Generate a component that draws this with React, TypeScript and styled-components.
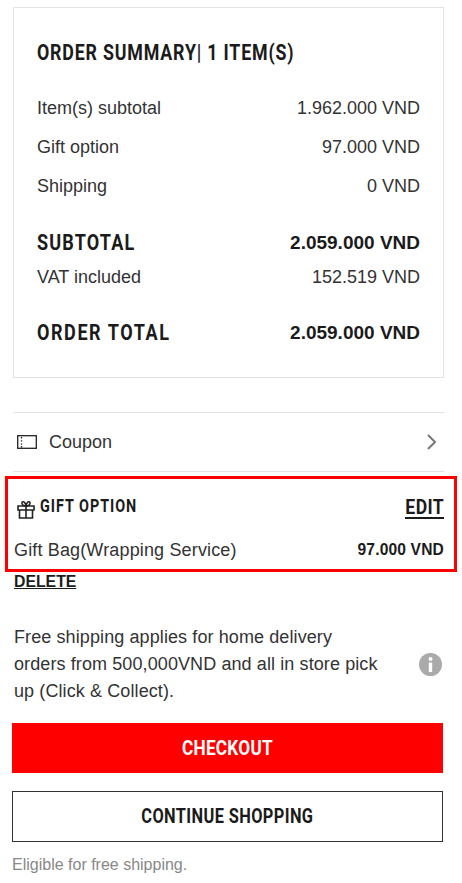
import styled, { createGlobalStyle } from "styled-components";

const GlobalStyle = createGlobalStyle`
  html, body {
    margin: 0;
    padding: 0;
    background: #fff;
  }
  * {
    box-sizing: border-box;
  }
`;

const display = `"Roboto", "Liberation Sans", sans-serif`;
const body = `"Liberation Sans", Arial, sans-serif`;

const Page = styled.div`
  width: 462px;
  height: 883px;
  overflow: hidden;
  padding: 7px 18px 0 13px;
  font-family: ${body};
  font-size: 18px;
  color: #333;
`;

const Card = styled.section`
  height: 371px;
  padding: 30px 23px 0;
  border: 1px solid #e3e3e3;
`;

// the reference heading face is a narrow bold, so Roboto gets squeezed sideways
const Condensed = styled.span<{ $size: number; $scale: number; $origin?: string; $spacing?: number }>`
  display: inline-block;
  font-family: ${display};
  font-size: ${(p) => p.$size}px;
  font-weight: 700;
  letter-spacing: ${(p) => p.$spacing ?? 1}px;
  color: #1b1b1b;
  white-space: nowrap;
  transform: scaleX(${(p) => p.$scale});
  transform-origin: ${(p) => p.$origin ?? "left"} center;
`;

const Title = styled.h2`
  margin: 0 0 21px;
  height: 30px;
  line-height: 30px;
  font-size: inherit;
`;

const Row = styled.div<{ $height?: number }>`
  display: flex;
  justify-content: space-between;
  align-items: center;
  height: ${(p) => p.$height ?? 39}px;
`;

const TotalValue = styled.span`
  font-size: 19px;
  font-weight: 700;
  color: #1b1b1b;
`;

const Spacer = styled.div<{ $height: number }>`
  height: ${(p) => p.$height}px;
`;

const CouponRow = styled.div`
  display: flex;
  align-items: center;
  height: 60px;
  margin-top: 34px;
  padding: 0 6px 0 4px;
  border-top: 1px solid #e3e3e3;
  border-bottom: 1px solid #e3e3e3;
  gap: 12px;
`;

const CouponText = styled.span`
  flex: 1;
`;

const GiftBox = styled.section`
  margin: 4px -13px 0 -8px;
  height: 96px;
  padding: 0 10px 0 6px;
  border: 3px solid #f00;
`;

const GiftHead = styled.div`
  display: flex;
  align-items: center;
  height: 56px;
  padding-top: 5px;
`;

const GiftIconWrap = styled.span`
  display: flex;
  margin: 0 5px 0 3px;
`;

const GiftName = styled.div`
  flex: 1;
  margin-top: -7px;
`;

const EditLink = styled.a`
  display: flex;
  justify-content: flex-end;
  width: 39px;
  height: 22px;
  line-height: 20px;
  margin-top: -3px;
  border-bottom: 2px solid #1b1b1b;
`;

const GiftLine = styled.div`
  display: flex;
  justify-content: space-between;
  align-items: center;
  height: 30px;
  letter-spacing: 0.15px;
`;

const GiftPrice = styled.span`
  font-size: 15.6px;
  font-weight: 700;
  color: #1b1b1b;
`;

const DeleteLink = styled.a`
  display: block;
  height: 20px;
  margin-left: 1px;
  line-height: 20px;
  font-size: 15.8px;
  font-weight: 700;
  color: #1b1b1b;
  text-decoration: underline;
`;

const Notice = styled.div`
  display: flex;
  align-items: center;
  justify-content: space-between;
  margin-top: 32px;
  padding: 0 2px 0 1px;
`;

const NoticeText = styled.p`
  margin: 0;
  width: 370px;
  line-height: 27px;
  letter-spacing: 0.1px;
`;

const ActionButton = styled.button<{ $primary?: boolean }>`
  display: flex;
  align-items: center;
  justify-content: center;
  width: 431px;
  height: ${(p) => (p.$primary ? 50 : 51)}px;
  margin: 18px 0 0 -1px;
  padding: 0 0 ${(p) => (p.$primary ? 0 : 2)}px;
  border: ${(p) => (p.$primary ? "0" : "1px solid #333")};
  background: ${(p) => (p.$primary ? "#f00" : "#fff")};
  ${Condensed} {
    color: ${(p) => (p.$primary ? "#fff" : "#1b1b1b")};
  }
`;

const Eligible = styled.p`
  margin: 12px 0 0 -1px;
  font-size: 16px;
  line-height: 22px;
  color: #888;
`;

const CouponIcon = () => (
  <svg width="20" height="14" viewBox="0 0 20 14" fill="none" stroke="#222" strokeWidth="1.3">
    <rect x="0.7" y="0.7" width="18.6" height="12.6" />
    <path d="M4.500 2v1.400M4.500 5.200v1.400M4.500 8.400v1.400M4.500 11v1.400" />
  </svg>
);

const Chevron = () => (
  <svg width="12" height="18" viewBox="0 0 12 18" fill="none" stroke="#777" strokeWidth="2">
    <path d="M2 2l7 7-7 7" />
  </svg>
);

const GiftIcon = () => (
  <svg width="18" height="19" viewBox="0 0 18 19" fill="none" stroke="#222" strokeWidth="1.6">
    <path d="M1 6h16v4H1zM2.500 10v8h13v-8M9 6v12" />
    <path d="M9 6C6.500 6 4.500 4.500 5 2.500 6 .5 8.500 2.500 9 6zM9 6c2.500 0 4.500-1.500 4-3.500C12 .5 9.500 2.500 9 6z" />
  </svg>
);

const InfoIcon = () => (
  <svg width="23" height="23" viewBox="0 0 23 23">
    <circle cx="11.500" cy="11.500" r="11.500" fill="#aaa" />
    <circle cx="11.500" cy="6" r="2" fill="#fff" />
    <path d="M9.800 9.500h3.400v9.500H9.800z" fill="#fff" />
  </svg>
);

const App = () => {
  return (
    <Page>
      <GlobalStyle />
      <Card>
        <Title>
          <Condensed $size={22} $scale={0.81}>ORDER SUMMARY| 1 ITEM(S)</Condensed>
        </Title>
        <Row>
          <span>Item(s) subtotal</span>
          <span>1.962.000 VND</span>
        </Row>
        <Row>
          <span>Gift option</span>
          <span>97.000 VND</span>
        </Row>
        <Row>
          <span>Shipping</span>
          <span>0 VND</span>
        </Row>
        <Spacer $height={17} />
        <Row>
          <Condensed $size={22} $scale={0.82} $spacing={1.4}>SUBTOTAL</Condensed>
          <TotalValue>2.059.000 VND</TotalValue>
        </Row>
        <Row $height={30}>
          <span>VAT included</span>
          <span>152.519 VND</span>
        </Row>
        <Spacer $height={21} />
        <Row>
          <Condensed $size={22} $scale={0.82} $spacing={1.9}>ORDER TOTAL</Condensed>
          <TotalValue>2.059.000 VND</TotalValue>
        </Row>
      </Card>

      <CouponRow>
        <CouponIcon />
        <CouponText>Coupon</CouponText>
        <Chevron />
      </CouponRow>

      <GiftBox>
        <GiftHead>
          <GiftIconWrap>
            <GiftIcon />
          </GiftIconWrap>
          <GiftName>
            <Condensed $size={18} $scale={0.8} $spacing={1.2}>GIFT OPTION</Condensed>
          </GiftName>
          <EditLink>
            <Condensed $size={20} $scale={0.88} $origin="right" $spacing={0.5}>EDIT</Condensed>
          </EditLink>
        </GiftHead>
        <GiftLine>
          <span>Gift Bag(Wrapping Service)</span>
          <GiftPrice>97.000 VND</GiftPrice>
        </GiftLine>
      </GiftBox>
      <DeleteLink>DELETE</DeleteLink>

      <Notice>
        <NoticeText>
          Free shipping applies for home delivery orders from 500,000VND and all in store pick up (Click &amp; Collect).
        </NoticeText>
        <InfoIcon />
      </Notice>

      <ActionButton $primary>
        <Condensed $size={21} $scale={0.82} $origin="center" $spacing={0.3}>CHECKOUT</Condensed>
      </ActionButton>
      <ActionButton>
        <Condensed $size={21} $scale={0.78} $origin="center" $spacing={0.5}>CONTINUE SHOPPING</Condensed>
      </ActionButton>
      <Eligible>Eligible for free shipping.</Eligible>
    </Page>
  );
};

export default App;
